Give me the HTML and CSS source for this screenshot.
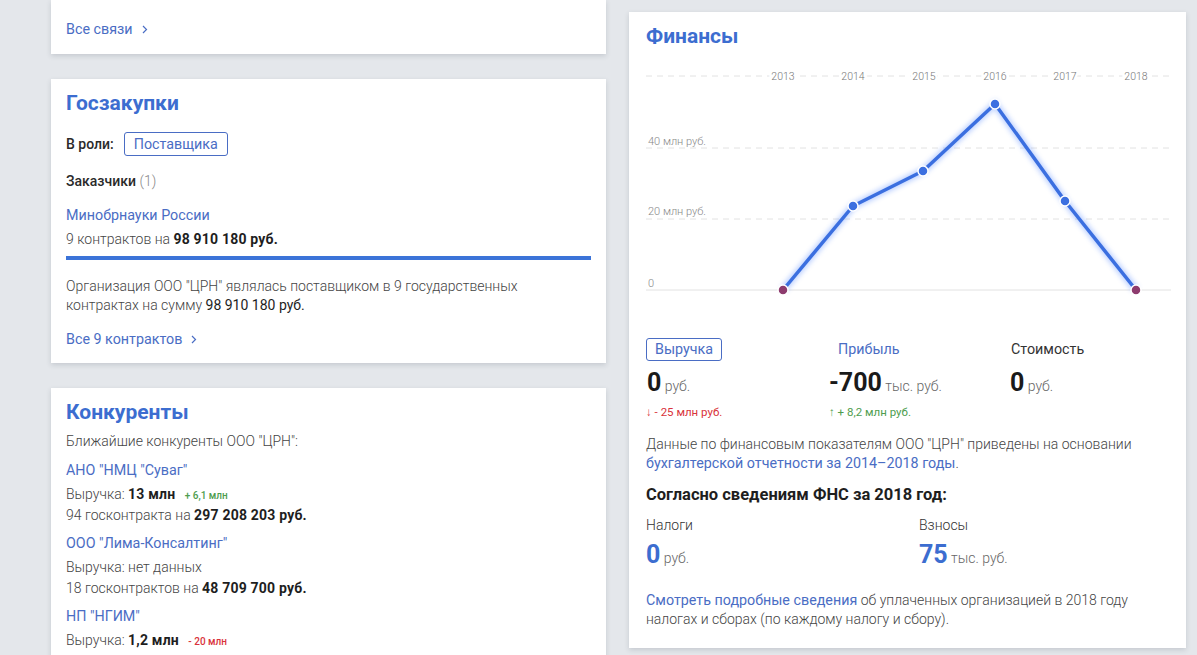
FILE: index.html
```html
<!DOCTYPE html>
<html lang="ru">
<head>
<meta charset="utf-8">
<link rel="stylesheet" href="styles.css">
</head>
<body>
<div class="page">
  <div class="col-left">
    <section class="card card-links">
      <a class="more" href="#">Все связи<svg class="chev" width="6" height="9" viewBox="0 0 6 9"><path d="M1 1l3.5 3.5L1 8"/></svg></a>
    </section>

    <section class="card card-gz">
      <h2 class="title">Госзакупки</h2>
      <div class="role-row"><span class="strong">В роли:</span><span class="badge">Поставщика</span></div>
      <div class="sub"><span class="strong">Заказчики</span> <span class="count">(1)</span></div>
      <a class="link" href="#">Минобрнауки России</a>
      <div class="line">9 контрактов на <b>98 910 180 руб.</b></div>
      <div class="bar"></div>
      <p class="para">Организация ООО "ЦРН" являлась поставщиком в 9 государственных контрактах на сумму <span class="dark">98 910 180 руб.</span></p>
      <a class="more" href="#">Все 9 контрактов<svg class="chev" width="6" height="9" viewBox="0 0 6 9"><path d="M1 1l3.5 3.5L1 8"/></svg></a>
    </section>

    <section class="card card-comp">
      <h2 class="title">Конкуренты</h2>
      <div class="intro">Ближайшие конкуренты ООО "ЦРН":</div>
      <div class="comp first">
        <a class="link" href="#">АНО "НМЦ "Суваг"</a>
        <div class="line">Выручка: <b>13 млн</b> <span class="delta up">+ 6,1 млн</span></div>
        <div class="line">94 госконтракта на <b>297 208 203 руб.</b></div>
      </div>
      <div class="comp">
        <a class="link" href="#">ООО "Лима-Консалтинг"</a>
        <div class="line">Выручка: нет данных</div>
        <div class="line">18 госконтрактов на <b>48 709 700 руб.</b></div>
      </div>
      <div class="comp">
        <a class="link" href="#">НП "НГИМ"</a>
        <div class="line">Выручка: <b>1,2 млн</b> <span class="delta down">- 20 млн</span></div>
      </div>
    </section>
  </div>

  <div class="col-right">
    <section class="card card-fin">
      <h2 class="title">Финансы</h2>
      <svg class="chart" width="525" height="245" viewBox="0 0 525 245">
        <defs>
          <filter id="glow" x="-20%" y="-20%" width="140%" height="140%">
            <feGaussianBlur stdDeviation="2.5"/>
          </filter>
        </defs>
        <g class="grid">
          <line x1="0" y1="16" x2="525" y2="16" class="dash"/>
          <line x1="0" y1="88" x2="525" y2="88" class="dash"/>
          <line x1="0" y1="159" x2="525" y2="159" class="dash"/>
          <line x1="0" y1="230" x2="525" y2="230" class="solid"/>
        </g>
        <g class="years">
          <text x="137" y="20">2013</text>
          <text x="207" y="20">2014</text>
          <text x="278" y="20">2015</text>
          <text x="349" y="20">2016</text>
          <text x="419" y="20">2017</text>
          <text x="490" y="20">2018</text>
        </g>
        <g class="ylab">
          <text x="2" y="85">40 млн руб.</text>
          <text x="2" y="155">20 млн руб.</text>
          <text x="2" y="227">0</text>
        </g>
        <polyline class="glow" points="137,230 207,146 277,111 349,44 419,141 490,230" filter="url(#glow)"/>
        <polyline class="curve" points="137,230 207,146 277,111 349,44 419,141 490,230"/>
        <circle class="pt neg" cx="137" cy="230" r="5"/>
        <circle class="pt" cx="207" cy="146" r="5"/>
        <circle class="pt" cx="277" cy="111" r="5"/>
        <circle class="pt" cx="349" cy="44" r="5"/>
        <circle class="pt" cx="419" cy="141" r="5"/>
        <circle class="pt neg" cx="490" cy="230" r="5"/>
      </svg>

      <div class="tabs">
        <div class="tab">
          <span class="tab-label active">Выручка</span>
          <div class="val"><b>0</b> руб.</div>
          <div class="chg down">↓ - 25 млн руб.</div>
        </div>
        <div class="tab">
          <span class="tab-label">Прибыль</span>
          <div class="val"><b>-700</b> тыс. руб.</div>
          <div class="chg up">↑ + 8,2 млн руб.</div>
        </div>
        <div class="tab">
          <span class="tab-label plain">Стоимость</span>
          <div class="val"><b>0</b> руб.</div>
        </div>
      </div>

      <p class="para fin-note">Данные по финансовым показателям ООО "ЦРН" приведены на основании <a class="link" href="#">бухгалтерской отчетности за 2014–2018 годы</a>.</p>

      <h3 class="fns">Согласно сведениям ФНС за 2018 год:</h3>
      <div class="taxes">
        <div class="tax">
          <div class="tax-label">Налоги</div>
          <div class="val blue"><b>0</b> руб.</div>
        </div>
        <div class="tax">
          <div class="tax-label">Взносы</div>
          <div class="val blue"><b>75</b> тыс. руб.</div>
        </div>
      </div>
      <p class="para fin-foot"><a class="link" href="#">Смотреть подробные сведения</a> об уплаченных организацией в 2018 году налогах и сборах (по каждому налогу и сбору).</p>
    </section>
  </div>
</div>
</body>
</html>
```

FILE: styles.css
```css
* { box-sizing: border-box; }
html, body { margin: 0; padding: 0; }
body {
  background: #e4e7eb;
  font-family: Roboto, "Liberation Sans", Arial, sans-serif;
  font-size: 14px;
  color: #444;
  width: 1197px;
  height: 655px;
  overflow: hidden;
}
a { text-decoration: none; }
.page {
  display: flex;
  gap: 23px;
  padding-left: 51px;
  align-items: flex-start;
}
.col-left {
  width: 555px;
  display: flex;
  flex-direction: column;
  gap: 25px;
}
.col-right {
  width: 557px;
  margin-top: 12px;
}
.card {
  background: #fff;
  box-shadow: 0 2px 5px rgba(40, 50, 70, 0.16);
  padding: 12px 15px 15px;
}
.title {
  margin: 0;
  font-size: 21px;
  line-height: 24px;
  font-weight: 700;
  color: #3c6dd0;
}
.link { color: #4a6dc4; font-weight: 400; font-size: 14.3px; }
.more {
  display: flex;
  align-items: center;
  color: #4a6dc4;
  line-height: 20px;
  font-size: 14.3px;
}
.chev {
  margin-left: 9px;
  margin-top: 1px;
  fill: none;
  stroke: #4a6dc4;
  stroke-width: 1.2;
}
.strong { font-weight: 500; color: #2a2a2a; }
b { font-weight: 700; color: #1e1e1e; }
.card-links { padding-top: 19px; padding-bottom: 15px; }

.role-row {
  display: flex;
  align-items: center;
  gap: 10px;
  margin-top: 17px;
}
.badge {
  display: inline-block;
  border: 1px solid #4a6dc4;
  border-radius: 3px;
  color: #4a6dc4;
  line-height: 22px;
  padding: 0 9px;
  font-size: 14.3px;
}
.sub { margin-top: 15px; line-height: 20px; }
.count { color: #888; font-weight: 300; }
.card-gz { padding-bottom: 14px; }
.card-gz .link { display: block; margin-top: 14px; line-height: 20px; }
.line { line-height: 20px; font-weight: 300; color: #444; }
.line b { font-weight: 700; letter-spacing: 0.2px; }
.card-gz .line { margin-top: 4px; }
.bar { height: 4px; background: #3b73d8; margin-top: 7px; }
.para {
  margin: 17px 0 0;
  line-height: 19px;
  font-weight: 300;
  color: #444;
  font-size: 14px;
}
.dark { color: #1e1e1e; font-weight: 400; }
.card-gz .more { margin-top: 14px; }

.card-comp { padding-bottom: 20px; }
.intro { margin-top: 7px; line-height: 20px; font-weight: 300; }
.comp { margin-top: 8px; }
.comp.first { margin-top: 9px; }
.comp .link { display: block; line-height: 20px; margin-bottom: 4px; }
.comp .line + .line { margin-top: 1px; }
.delta { font-size: 10px; line-height: 10px; font-weight: 500; margin-left: 6px; }
.delta.up { color: #4e9d4e; }
.delta.down { color: #d9333b; }

.card-fin { padding: 12px 17px 22px; height: 636px; }
.chart { display: block; margin-top: 12px; }
.grid line { stroke: #e2e2e2; stroke-width: 1; }
.grid .dash { stroke-dasharray: 6 5; }
.years text {
  font-size: 10.5px;
  fill: #777;
  font-weight: 300;
  text-anchor: middle;
  stroke: #fff;
  stroke-width: 5px;
  paint-order: stroke;
}
.ylab text { font-size: 11px; fill: #888; font-weight: 300; }
.curve { fill: none; stroke: #3b6fe0; stroke-width: 3.5; stroke-linejoin: round; }
.glow { fill: none; stroke: #6f9bff; stroke-width: 7; opacity: 0.45; }
.pt { fill: #3b6fe0; stroke: #fff; stroke-width: 1.5; }
.pt.neg { fill: #8d3b6e; }

.tabs {
  display: grid;
  grid-template-columns: 183px 181px auto;
  margin-top: 33px;
}
.tab-label {
  display: inline-block;
  border: 1px solid transparent;
  border-radius: 3px;
  padding: 0 8px;
  line-height: 21px;
  color: #4a6dc4;
  font-size: 14.3px;
}
.tab-label.active { border-color: #4a6dc4; }
.tab-label.plain { color: #333; padding: 0; }
.val {
  margin-top: 8px;
  line-height: 28px;
  font-weight: 300;
  color: #666;
  font-size: 14px;
}
.val b { font-size: 25px; font-weight: 700; color: #1a1a1a; }
.tab:first-child .val { margin-left: 1px; }
.chg { font-size: 11.5px; line-height: 16px; margin-top: 4px; font-weight: 400; }
.chg.down { color: #d9333b; }
.chg.up { color: #4e9d4e; }

.fin-note { margin-top: 15px; }
.fns {
  margin: 12px 0 0;
  font-size: 16.5px;
  line-height: 20px;
  font-weight: 700;
  color: #1e1e1e;
}
.taxes {
  display: grid;
  grid-template-columns: 273px auto;
  margin-top: 10px;
}
.tax-label { line-height: 20px; font-weight: 300; color: #333; }
.taxes .val { margin-top: 6px; }
.val.blue b { color: #3c6dd0; }
.fin-foot { margin-top: 19px; }
```
